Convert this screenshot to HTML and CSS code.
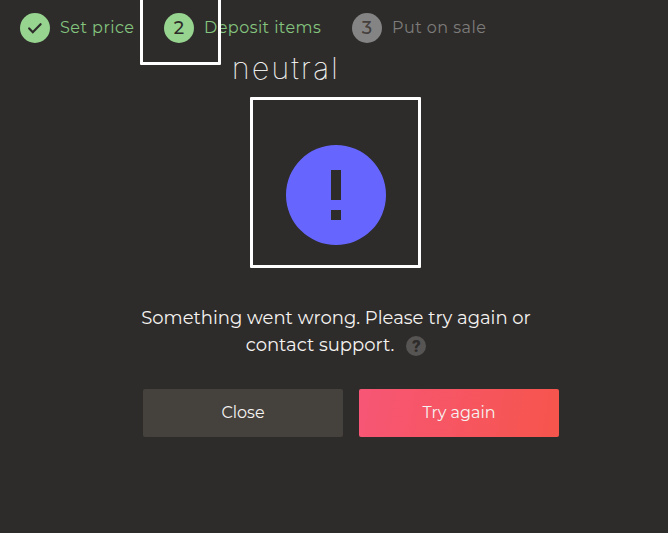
FILE: index.html
```html
<!DOCTYPE html>
<html lang="en">
<head>
<meta charset="utf-8">
<title>Deposit items</title>
<link rel="stylesheet" href="styles.css">
</head>
<body>
<main class="dialog">
  <ol class="steps">
    <li class="step step-price">
      <span class="badge"><svg width="16" height="14" viewBox="0 0 16 14"><path d="M2.2 7.4 5.8 11.2 13.6 3.2" fill="none" stroke="currentColor" stroke-width="2.2" stroke-linecap="round"/></svg></span>
      <span class="label">Set price</span>
    </li>
    <li class="step step-deposit"><span class="badge">2</span><span class="label">Deposit items</span></li>
    <li class="step step-sale"><span class="badge">3</span><span class="label">Put on sale</span></li>
  </ol>
  <svg class="status" width="100" height="100" viewBox="0 0 100 100"><path fill="#6666ff" fill-rule="evenodd" d="M50 0a50 50 0 1 1 0 100A50 50 0 0 1 50 0ZM45 25v30h10V25ZM45 65v10h10V65Z"/></svg>
  <p class="message">
    <span class="line">Something went wrong. Please try again or</span>
    <span class="line"><span>contact support.</span><span class="help">?</span></span>
  </p>
  <div class="actions">
    <button class="button button-close"><span>Close</span></button>
    <button class="button button-retry"><span>Try again</span></button>
  </div>
  <div class="marker marker-step"></div>
  <div class="marker marker-status"></div>
  <span class="marker-label">neutral</span>
</main>
</body>
</html>
```
FILE: styles.css
```css
* { box-sizing: border-box; }
body {
  margin: 0;
  background: #2e2c2a;
  color: #f5f3f1;
  font-family: Montserrat, Inter, "Open Sans", sans-serif;
}
.dialog {
  position: relative;
  display: flex;
  flex-direction: column;
  height: 533px;
  overflow: hidden;
}
.steps {
  display: flex;
  margin: 0;
  padding: 13px 0 0 20px;
  height: 145px;
  list-style: none;
}
.step { display: flex; gap: 10px; height: 30px; color: #84c57f; }
.step-price { width: 144px; }
.step-deposit { width: 188px; }
.step-sale { color: #7d7c7b; }
.badge {
  display: flex;
  flex: none;
  align-items: center;
  justify-content: center;
  width: 30px;
  height: 30px;
  border-radius: 50%;
  background: #96d490;
  color: #2e2c2a;
  font-size: 18px;
  font-weight: 500;
}
.step-sale .badge { background: #858484; color: #45403e; }
.label {
  font-size: 16px;
  line-height: 29px;
  letter-spacing: .47px;
  white-space: nowrap;
}
.status { align-self: center; margin-left: 4px; flex: none; }
.message {
  width: 400px;
  margin: 60px 0 0 136px;
  font-size: 18px;
  line-height: 27px;
}
.line { display: flex; align-items: center; justify-content: center; white-space: nowrap; }
.help {
  width: 20px;
  height: 20px;
  margin-left: 12px;
  border-radius: 50%;
  background: #575554;
  color: #2e2c2a;
  font: 900 17px/20px Roboto, sans-serif;
  text-align: center;
}
.actions { display: flex; gap: 16px; margin: 30px 0 0 143px; }
.button {
  width: 200px;
  height: 48px;
  padding: 0 0 2px;
  border: 0;
  border-radius: 2px;
  color: #f5f3f1;
  font: 16px Montserrat, Inter, "Open Sans", sans-serif;
}
.button-close { background: #45413d; }
.button-retry { background: linear-gradient(100deg, #f75676, #f6554c); }
.marker { position: absolute; border: 3px solid #fff; border-radius: 1px; }
.marker-step { left: 140px; top: -10px; width: 81px; height: 75px; }
.marker-status { left: 250px; top: 97px; width: 171px; height: 171px; }
.marker-label {
  position: absolute;
  left: 232px;
  top: 50px;
  color: #fff;
  font: 100 30px/36px Inter, Roboto, sans-serif;
  letter-spacing: 2.4px;
  -webkit-text-stroke: .2px #fff;
}
```
